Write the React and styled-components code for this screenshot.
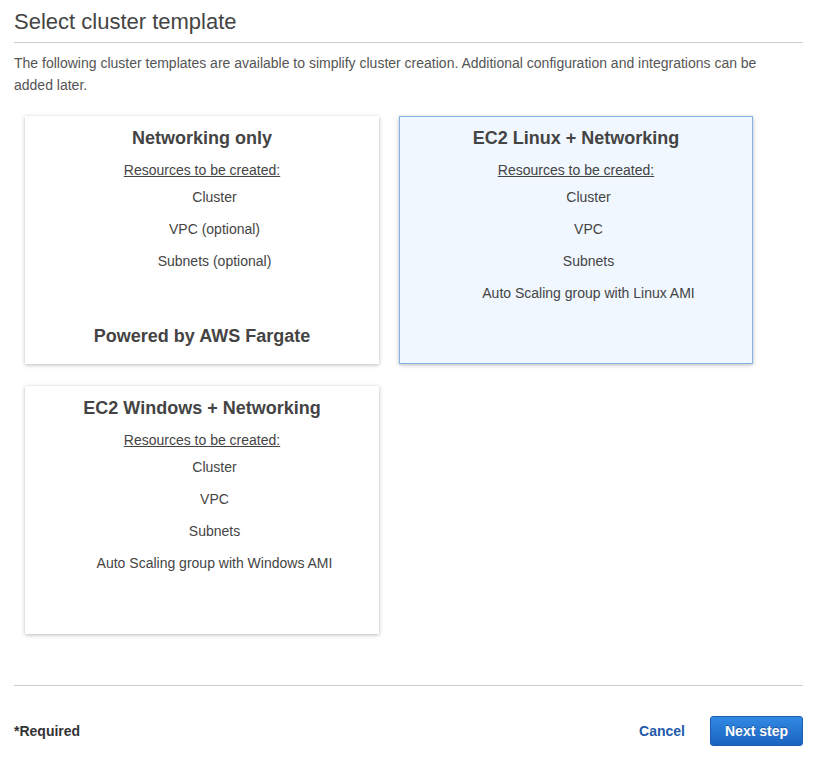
import React from 'react';
import styled, { createGlobalStyle } from 'styled-components';

const GlobalStyle = createGlobalStyle`
  body {
    margin: 0;
    background: #fff;
    font-family: "Liberation Sans", Arial, sans-serif;
    color: #444;
  }
`;

const templates = [
  {
    id: 'fargate',
    title: 'Networking only',
    items: ['Cluster', 'VPC (optional)', 'Subnets (optional)'],
    footer: 'Powered by AWS Fargate',
  },
  {
    id: 'linux',
    title: 'EC2 Linux + Networking',
    items: ['Cluster', 'VPC', 'Subnets', 'Auto Scaling group with Linux AMI'],
    selected: true,
  },
  {
    id: 'windows',
    title: 'EC2 Windows + Networking',
    items: ['Cluster', 'VPC', 'Subnets', 'Auto Scaling group with Windows AMI'],
  },
];

const App = () => {
  return (
    <Page>
      <GlobalStyle />
      <Heading>Select cluster template</Heading>
      <Intro>
        The following cluster templates are available to simplify cluster creation. Additional
        configuration and integrations can be added later.
      </Intro>
      <CardGrid>
        {templates.map((t) => (
          <Card key={t.id} $selected={t.selected}>
            <CardTitle>{t.title}</CardTitle>
            <ResourceLabel>Resources to be created:</ResourceLabel>
            <ResourceList>
              {t.items.map((item) => (
                <li key={item}>{item}</li>
              ))}
            </ResourceList>
            {t.footer && <CardFooter>{t.footer}</CardFooter>}
          </Card>
        ))}
      </CardGrid>
      <Footer>
        <Required>*Required</Required>
        <Actions>
          <CancelLink>Cancel</CancelLink>
          <PrimaryButton>Next step</PrimaryButton>
        </Actions>
      </Footer>
    </Page>
  );
};

export default App;

const Page = styled.div`
  padding: 0 10px 0 14px;
`;

const Heading = styled.h1`
  margin: 0;
  padding: 9px 0 8px;
  font-size: 22px;
  font-weight: normal;
  line-height: 25px;
  color: #444;
  border-bottom: 1px solid #ccc;
`;

const Intro = styled.p`
  max-width: 760px;
  margin: 9px 0 0;
  font-size: 14px;
  line-height: 22px;
  color: #555;
`;

const CardGrid = styled.div`
  display: grid;
  grid-template-columns: 354px 354px;
  column-gap: 20px;
  row-gap: 22px;
  margin: 20px 0 0 11px;
`;

const Card = styled.div`
  box-sizing: border-box;
  height: 248px;
  display: flex;
  flex-direction: column;
  align-items: center;
  padding: 10px 10px 10px;
  background: ${(p) => (p.$selected ? '#f0f7fe' : '#fff')};
  border: 1px solid ${(p) => (p.$selected ? '#86b3e3' : '#fff')};
  box-shadow: 0 1px 4px rgba(0, 0, 0, 0.28);
`;

const CardTitle = styled.h3`
  margin: 0;
  font-size: 18px;
  line-height: 22px;
  font-weight: bold;
  color: #444;
`;

const ResourceLabel = styled.div`
  margin-top: 11px;
  font-size: 14px;
  line-height: 20px;
  text-decoration: underline;
  color: #444;
`;

const ResourceList = styled.ul`
  list-style: none;
  margin: 1px 0 0;
  padding: 0 0 0 25px;
  text-align: center;
  font-size: 14px;
  line-height: 32px;
  color: #444;
`;

const CardFooter = styled.div`
  margin-top: auto;
  margin-bottom: 6px;
  font-size: 18px;
  line-height: 22px;
  font-weight: bold;
  color: #444;
`;

const Footer = styled.div`
  margin-top: 51px;
  border-top: 1px solid #ccc;
  padding-top: 30px;
  display: flex;
  align-items: center;
  justify-content: space-between;
`;

const Required = styled.span`
  font-size: 14px;
  font-weight: bold;
  color: #333;
`;

const Actions = styled.div`
  display: flex;
  align-items: center;
  gap: 25px;
`;

const CancelLink = styled.a`
  font-size: 14px;
  font-weight: bold;
  color: #1f5aab;
  cursor: pointer;
`;

const PrimaryButton = styled.button`
  box-sizing: border-box;
  width: 93px;
  height: 30px;
  border: 1px solid #1b5fae;
  border-radius: 3px;
  background: linear-gradient(#3189e3, #1a64c0);
  color: #fff;
  font-family: "Liberation Sans", Arial, sans-serif;
  font-size: 14px;
  font-weight: bold;
  text-shadow: 0 -1px 0 rgba(0, 0, 0, 0.3);
  cursor: pointer;
`;
